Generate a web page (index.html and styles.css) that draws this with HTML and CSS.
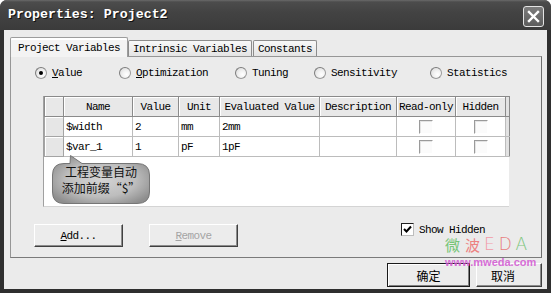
FILE: index.html
```html
<!DOCTYPE html>
<html>
<head>
<meta charset="utf-8">
<link rel="stylesheet" href="styles.css">
</head>
<body>
<div class="window">
  <div class="titlebar">
    <span class="title">Properties: Project2</span>
    <div class="close">
      <svg width="13" height="13" viewBox="0 0 13 13"><path d="M2 2 L11 11 M11 2 L2 11" stroke="#fff" stroke-width="2.4" stroke-linecap="square"/></svg>
    </div>
  </div>
  <div class="client">
    <div class="tabs">
      <div class="tab tab-active">Project Variables</div>
      <div class="tab">Intrinsic Variables</div>
      <div class="tab tab-last">Constants</div>
    </div>
    <div class="panel">
      <div class="radios">
        <label class="radio"><span class="dot checked"></span><span><u>V</u>alue</span></label>
        <label class="radio"><span class="dot"></span><span><u>O</u>ptimization</span></label>
        <label class="radio"><span class="dot"></span><span>Tuning</span></label>
        <label class="radio"><span class="dot"></span><span>Sensitivity</span></label>
        <label class="radio"><span class="dot"></span><span>Statistics</span></label>
      </div>
      <div class="grid">
        <table class="vars">
          <colgroup>
            <col class="c-rh"><col class="c-name"><col class="c-val"><col class="c-unit"><col class="c-eval"><col class="c-desc"><col class="c-ro"><col class="c-hid"><col class="c-end">
          </colgroup>
          <thead>
            <tr><th></th><th>Name</th><th>Value</th><th>Unit</th><th>Evaluated Value</th><th>Description</th><th>Read-only</th><th>Hidden</th><th class="end"></th></tr>
          </thead>
          <tbody>
            <tr><td class="rh"></td><td>$width</td><td>2</td><td>mm</td><td>2mm</td><td></td><td class="ck"><span class="box"></span></td><td class="ck"><span class="box"></span></td><td class="end"></td></tr>
            <tr><td class="rh"></td><td>$var_1</td><td>1</td><td>pF</td><td>1pF</td><td></td><td class="ck"><span class="box"></span></td><td class="ck"><span class="box"></span></td><td class="end"></td></tr>
          </tbody>
        </table>
        <div class="bubble">
          <svg class="bubble-bg" width="100" height="50" viewBox="0 0 100 50">
            <defs>
              <radialGradient id="bg" cx="50%" cy="50%" r="60%">
                <stop offset="0" stop-color="#d4d4d4"/>
                <stop offset="0.6" stop-color="#bdbdbd"/>
                <stop offset="1" stop-color="#8e8e8e"/>
              </radialGradient>
            </defs>
            <path d="M13,8.5 L19,8.5 L19.5,0.5 L31,8.5 L86,8.5 Q98.5,8.5 98.5,20 L98.5,37 Q98.5,48.5 86,48.5 L13,48.5 Q1.5,48.5 1.5,37 L1.5,20 Q1.5,8.5 13,8.5 Z" fill="url(#bg)" stroke="#767676" stroke-width="1"/>
          </svg>
          <div class="bubble-text">工程变量自动<br>添加前缀“$”</div>
        </div>
      </div>
      <div class="actions">
        <button class="btn"><u>A</u>dd...</button>
        <button class="btn btn-disabled"><u>R</u>emove</button>
        <label class="check"><span class="cbox"><svg width="9" height="9" viewBox="0 0 9 9"><path d="M1 4 L3.5 6.5 L8 1.5" stroke="#000" stroke-width="2" fill="none"/></svg></span><span>Show Hidden</span></label>
      </div>
    </div>
    <div class="footer">
      <button class="btn fbtn fbtn-ok">确定</button>
      <button class="btn fbtn fbtn-cancel">取消</button>
    </div>
    <div class="wm-logo"><span class="g">微</span><span class="r">波</span><span class="eda"><span class="p">E</span><span class="r2">D</span><span class="g2">A</span></span></div>
    <div class="wm-url">www.mweda.com</div>
  </div>
</div>
</body>
</html>
```
FILE: styles.css
```css
* { box-sizing: border-box; }
body {
  margin: 0;
  background: #fff;
  font-family: "Liberation Mono", "Noto Sans CJK SC", monospace;
  font-size: 11px;
  letter-spacing: -0.6px;
  color: #000;
}
.window {
  width: 551px;
  height: 293px;
  display: flex;
  flex-direction: column;
  position: relative;
  background: #2f2f2f;
  border-radius: 7px 7px 0 0;
  overflow: hidden;
}
.titlebar {
  height: 30px;
  flex: none;
  display: flex;
  align-items: center;
  padding: 0 7px 0 8px;
  background: linear-gradient(#6a6a6a 0, #4c4c4c 2px, #434343 40%, #3b3b3b 100%);
}
.title {
  flex: 1;
  font-weight: bold;
  font-size: 13.3px;
  letter-spacing: 0;
  color: #fff;
  text-shadow: 1px 1px 0 #111;
  margin-top: -1px;
}
.close {
  width: 21px;
  height: 21px;
  border: 1px solid #e4e4e4;
  border-radius: 3px;
  background: linear-gradient(#7c7c7c, #5c5c5c);
  display: flex;
  align-items: center;
  justify-content: center;
  margin-top: 2px;
}
.client {
  flex: 1;
  margin: 0 4px 4px;
  background: #ebebeb;
  display: flex;
  flex-direction: column;
  padding: 7px 5px 0 6px;
  position: relative;
}
.tabs {
  display: flex;
  align-items: flex-end;
  height: 19px;
  position: relative;
  z-index: 2;
}
.tab {
  height: 16px;
  padding: 0 4px;
  border: 1px solid #8c8c8c;
  border-bottom: none;
  border-radius: 2px 2px 0 0;
  background: linear-gradient(#f8f8f8, #e4e4e4);
  display: flex;
  align-items: center;
  white-space: nowrap;
}
.tab-active {
  height: 20px;
  margin-bottom: -1px;
  padding: 0 7px;
  background: #f3f3f3;
  border-color: #9c9c9c;
  box-shadow: inset 0 2px 0 #fff;
}
.tab-last { margin-left: 1px; }
.panel {
  height: 202px;
  flex: none;
  border: 1px solid #969696;
  border-right-color: #6e6e6e;
  border-bottom-color: #7a7a7a;
  background: #ebebeb;
  display: flex;
  flex-direction: column;
}
.radios {
  margin-top: 8px;
  height: 16px;
  padding-left: 24px;
  display: grid;
  grid-template-columns: 84px 116px 79px 116px auto;
  align-items: center;
}
.radio {
  display: flex;
  align-items: center;
  gap: 5px;
}
.dot {
  width: 12px;
  height: 12px;
  border-radius: 50%;
  border: 1px solid #9a9a9a;
  border-top-color: #7c7c7c;
  border-left-color: #7c7c7c;
  background: radial-gradient(circle at 65% 65%, #fff 0, #f2f2f2 40%, #d6d6d6 100%);
  display: flex;
  align-items: center;
  justify-content: center;
}
.dot.checked::after {
  content: "";
  width: 4px;
  height: 4px;
  border-radius: 50%;
  background: #000;
}
.grid {
  position: relative;
  margin: 15px 0 0 32px;
  width: 466px;
  height: 111px;
  background: #fff;
  border-left: 1px solid #a0a0a0;
  border-bottom: 1px solid #d4d4d4;
}
.vars {
  border-collapse: collapse;
  table-layout: fixed;
  width: 465px;
}
.c-rh { width: 19px; }
.c-name { width: 69px; }
.c-val { width: 46px; }
.c-unit { width: 41px; }
.c-eval { width: 100px; }
.c-desc { width: 77px; }
.c-ro { width: 59px; }
.c-hid { width: 50px; }
.c-end { width: 4px; }
.vars th {
  height: 20px;
  font-weight: normal;
  text-align: center;
  background: #e8e8e8;
  border: 1px solid #8a8a8a;
  box-shadow: inset 1px 1px 0 #fff;
  padding: 0;
  white-space: nowrap;
  overflow: hidden;
}
.vars td {
  height: 20px;
  border: 1px solid #bcbcbc;
  padding: 0 0 0 2px;
  white-space: nowrap;
}
.vars td.rh {
  background: #e6e6e6;
  border-color: #a4a4a4;
  box-shadow: inset 1px 1px 0 #fff;
}
.vars .end {
  background: #e2e2e2;
  border-left: 1px solid #8a8a8a;
  border-right: 1px solid #8a8a8a;
  box-shadow: none;
}
.vars td.ck {
  text-align: center;
  padding: 0;
}
.box {
  display: inline-block;
  vertical-align: middle;
  width: 14px;
  height: 14px;
  border: 1px solid #fff;
  border-top-color: #9a9a9a;
  border-left-color: #9a9a9a;
  background: #fbfbfb;
  box-shadow: inset 1px 1px 0 #e4e4e4;
}
.bubble {
  position: absolute;
  left: 7px;
  top: 59px;
  width: 100px;
  height: 50px;
}
.bubble-bg {
  position: absolute;
  left: 0;
  top: 0;
}
.bubble-text {
  position: absolute;
  left: 0;
  top: 9px;
  width: 100px;
  text-align: center;
  font-family: "Noto Sans CJK SC", sans-serif;
  font-size: 12px;
  line-height: 16px;
  letter-spacing: 0;
  color: #111;
}
.actions {
  margin-top: 17px;
  padding-left: 23px;
  display: flex;
  align-items: center;
  height: 23px;
}
.btn {
  font-family: "Liberation Mono", monospace;
  font-size: 11px;
  letter-spacing: -0.6px;
  color: #000;
  width: 89px;
  height: 23px;
  padding: 0;
  background: #ececec;
  border: 1px solid;
  border-color: #fff #404040 #404040 #fff;
  box-shadow: inset -1px -1px 0 #8c8c8c;
  border-radius: 0;
}
.btn + .btn { margin-left: 26px; }
.btn-disabled { color: #a4a4a4; }
.check {
  margin-left: 163px;
  align-self: flex-start;
  margin-top: -1px;
  display: flex;
  align-items: center;
  gap: 5px;
}
.cbox {
  width: 13px;
  height: 13px;
  border: 1px solid #1e1e1e;
  border-right-color: #bdbdbd;
  border-bottom-color: #bdbdbd;
  background: #fff;
  display: flex;
  align-items: center;
  justify-content: center;
}
.footer {
  margin-top: 5px;
  display: flex;
  justify-content: flex-end;
  gap: 6px;
}
.fbtn {
  height: 24px;
  font-family: "Noto Sans CJK SC", sans-serif;
  font-size: 12px;
  letter-spacing: 0;
}
.btn.fbtn + .btn.fbtn { margin-left: 0; }
.fbtn-ok {
  width: 83px;
  border-color: #1a1a1a;
  box-shadow: inset 1px 1px 0 #fff, inset -1px -1px 0 #808080;
}
.fbtn-cancel {
  width: 66px;
  padding-right: 12px;
}
.wm-logo {
  position: absolute;
  left: 441px;
  top: 207px;
  font-family: "Noto Sans CJK SC", sans-serif;
  font-size: 15px;
  letter-spacing: 0;
  line-height: 15px;
  display: flex;
  align-items: flex-end;
  opacity: 0.85;
}
.wm-logo .g { color: #62bf62; margin-right: 5px; }
.wm-logo .r { color: #ee6f6f; margin-right: 4px; }
.eda {
  font-family: "DejaVu Sans", sans-serif;
  font-size: 17px;
  line-height: 15px;
  font-weight: 200;
  letter-spacing: 4px;
}
.eda .p { color: #f48c9c; }
.eda .r2 { color: #e86a6a; }
.eda .g2 { color: #6cc06c; }
.wm-url {
  position: absolute;
  left: 441px;
  top: 226px;
  font-family: "Liberation Sans", sans-serif;
  font-weight: bold;
  font-size: 11px;
  letter-spacing: 0;
  color: #d45fd4;
  opacity: 0.9;
}
```
